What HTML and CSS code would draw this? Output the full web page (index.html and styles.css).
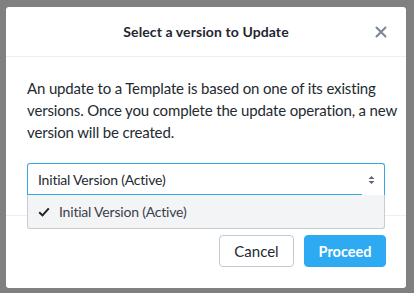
FILE: index.html
```html
<!doctype html>
<html lang="en">
<head>
    <meta charset="UTF-8">
    <title>Select a version</title>
    <link rel="stylesheet" href="styles.css">
</head>
<body>
    <div class="modal">
        <div class="modal-head">
            <h2>Select a version to Update</h2>
            <span class="close">
                <svg width="12" height="12" viewBox="0 0 12 12"><path d="M1.5 1.5l9 9M10.5 1.5l-9 9" stroke="#7b8692" stroke-width="2" stroke-linecap="round"/></svg>
            </span>
        </div>

        <div class="modal-body">
            <p>An update to a Template is based on one of its existing versions. Once you complete the update operation, a new version will be created.</p>
            <div class="select">
                <div class="select-box">
                    <span>Initial Version (Active)</span>
                    <svg class="caret" width="7" height="10" viewBox="0 0 7 10"><path d="M3.5 1L6.5 4H0.5z M3.5 9L0.5 6H6.5z" fill="#5d6672"/></svg>
                </div>
                <ul class="options">
                    <li class="selected">
                        <svg class="tick" width="12" height="10" viewBox="0 0 12 10"><path d="M1.2 5.2l3.3 3.2 6.3-7" fill="none" stroke="#1f2329" stroke-width="2"/></svg>
                        Initial Version (Active)
                    </li>
                </ul>
            </div>
        </div>

        <div class="modal-foot">
            <button class="btn btn-cancel">Cancel</button>
            <button class="btn btn-primary">Proceed</button>
        </div>
    </div>
</body>
</html>
```

FILE: styles.css
```css
*{padding: 0; margin: 0; box-sizing: border-box;}
body{background: #808080; font-family: Lato, "Liberation Sans", sans-serif; color: #242a31; padding: 7px 8px 5px 6px; height: 293px;}

.modal{width: 400px; height: 281px; background: #fff; border-radius: 3px;}

.modal-head{height: 50px; border-bottom: 1px solid #eceef0; display: flex; align-items: center; justify-content: center; position: relative;}
.modal-head h2{font-size: 14px; font-weight: 700; color: #1f2731; letter-spacing: 0.1px;}
.close{position: absolute; right: 19px; top: 19px; width: 12px; height: 12px; display: flex;}

.modal-body{padding: 20px 21px 21px 21px; border-bottom: 1px solid #eceef0; height: 159px;}
.modal-body p{font-size: 15px; line-height: 22px; color: #242a31; letter-spacing: -0.15px; margin-right: -18px;}

.select{margin-top: 20px; position: relative;}
.select-box{height: 32px; border: 1px solid #36a8ea; border-bottom: none; border-radius: 3px 3px 0 0; display: flex; align-items: center; justify-content: space-between; padding: 0 9px 0 10px; font-size: 14px; letter-spacing: -0.2px; position: relative;}
.select-box::after{content: ''; position: absolute; left: -1px; bottom: -1px; width: 335px; height: 2px; background: #36a8ea;}
.caret{display: block;}

.options{list-style: none; position: absolute; left: 0; right: 0; top: 32px; background: #f3f4f6; border: 1px solid #c7ccd1; border-top: none; border-radius: 0 0 3px 3px; z-index: 2;}
.options li{height: 33px; display: flex; align-items: center; padding-left: 10px; font-size: 14px; letter-spacing: -0.2px; color: #3a414a;}
.tick{margin-right: 9px;}

.modal-foot{display: flex; justify-content: flex-end; gap: 10px; padding: 19px 20px 0 0;}
.btn{height: 32px; border-radius: 4px; font-family: Lato, "Liberation Sans", sans-serif; font-size: 15px; padding: 0 10px; cursor: pointer;}
.btn-cancel{background: #fff; border: 1px solid #c3c9cf; color: #242a31; width: 75px;}
.btn-primary{background: #2eaaf3; border: 1px solid #2eaaf3; color: #fff; font-weight: 700; font-size: 14.5px; width: 82px;}
```
